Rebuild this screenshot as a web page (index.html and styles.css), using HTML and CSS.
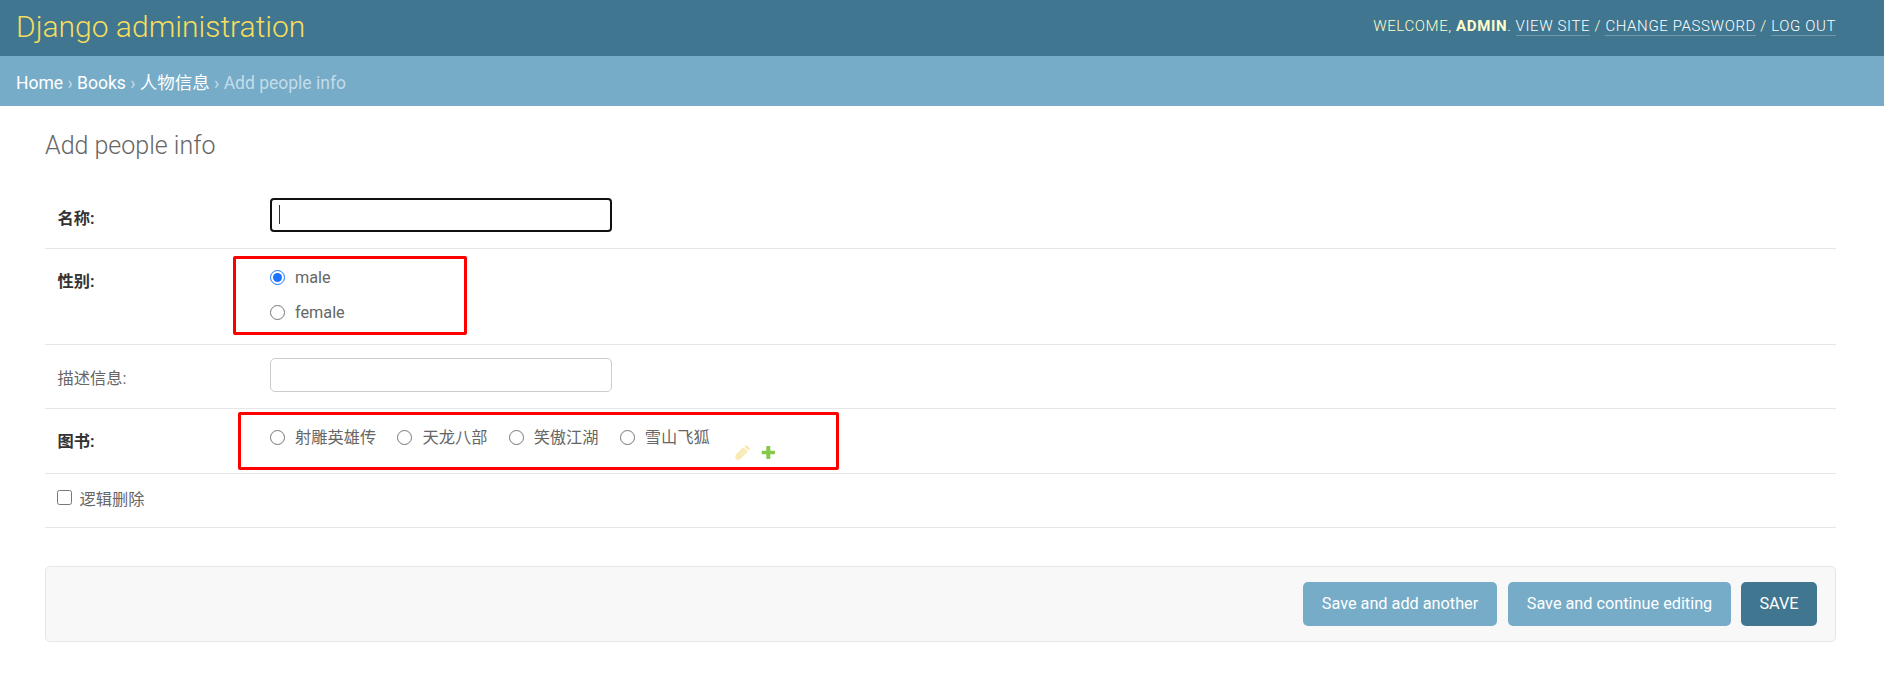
FILE: index.html
```html
<!DOCTYPE html>
<html lang="zh-CN">
<head>
<meta charset="utf-8">
<title>Add people info | Django site admin</title>
<link rel="stylesheet" href="styles.css">
</head>
<body>
<header class="header">
  <div class="site-name">Django administration</div>
  <div class="user-tools">Welcome, <strong>admin</strong>. <a>View site</a> / <a>Change password</a> / <a>Log out</a></div>
</header>
<nav class="breadcrumbs"><a>Home</a> › <a>Books</a> › <a>人物信息</a> › Add people info</nav>
<main class="content">
  <h1 class="title">Add people info</h1>
  <form>
    <div class="row row-name">
      <label class="label required">名称:</label>
      <div class="field focused"><input class="text-input" type="text"></div>
    </div>
    <div class="row row-gender">
      <span class="label required">性别:</span>
      <div class="radio-list">
        <label class="option"><input class="radio" type="radio" name="gender" checked><span class="option-text">male</span></label>
        <label class="option"><input class="radio" type="radio" name="gender"><span class="option-text">female</span></label>
      </div>
      <div class="mark mark-gender"></div>
    </div>
    <div class="row row-desc">
      <label class="label">描述信息:</label>
      <div class="field"><input class="text-input" type="text"></div>
    </div>
    <div class="row row-book">
      <span class="label required">图书:</span>
      <div class="radio-inline">
        <label class="option"><input class="radio" type="radio" name="book"><span class="option-text">射雕英雄传</span></label>
        <label class="option"><input class="radio" type="radio" name="book"><span class="option-text">天龙八部</span></label>
        <label class="option"><input class="radio" type="radio" name="book"><span class="option-text">笑傲江湖</span></label>
        <label class="option"><input class="radio" type="radio" name="book"><span class="option-text">雪山飞狐</span></label>
      </div>
      <div class="related">
        <svg class="icon faded" viewBox="0 0 15 15"><path fill="#efb80b" d="M.6 10.1 8.4 2.3l4.3 4.3-7.8 7.8-3.2.4L.3 13.3zM9.4 1.4l.9-.9q.8-.7 1.6 0l2.6 2.6q.8.8 0 1.6l-.9.9z"/><path stroke="#fff" stroke-width=".5" fill="none" d="m3 10.8 6.4-6.4M4.3 12.2l6.4-6.4M1.3 12.3l1.6 1.6"/></svg>
        <svg class="icon" viewBox="0 0 15 15"><path fill="#70bf2b" fill-opacity=".85" d="M6 1h2.6q.7 0 .7.7v4h4q.7 0 .7.7v2.2q0 .7-.7.7h-4v4q0 .7-.7.7H6q-.7 0-.7-.7v-4h-4q-.7 0-.7-.7V6.4q0-.7.7-.7h4v-4Q5.300 1 6 1z"/></svg>
      </div>
      <div class="mark mark-book"></div>
    </div>
    <div class="row row-delete">
      <label class="check"><input class="checkbox" type="checkbox">逻辑删除</label>
    </div>
    <div class="submit-row">
      <button class="button add" type="button">Save and add another</button>
      <button class="button continue" type="button">Save and continue editing</button>
      <button class="button save" type="button">SAVE</button>
    </div>
  </form>
</main>
</body>
</html>
```
FILE: styles.css
```css
* { box-sizing: border-box; }

body {
  margin: 0;
  background: #fff;
  color: #666;
  font: 16.25px/20px Roboto, "Noto Sans CJK SC", sans-serif;
}

.header {
  display: flex;
  justify-content: space-between;
  align-items: center;
  height: 56px;
  padding: 0 48px 0 16px;
  background: #40768f;
  color: #ffc;
}

.site-name {
  color: #f5dd5d;
  font-size: 30px;
  font-weight: 300;
  line-height: 36px;
  padding-bottom: 2px;
}

.user-tools {
  font-size: 15px;
  font-weight: 300;
  letter-spacing: .62px;
  text-transform: uppercase;
  padding-bottom: 4px;
}

.user-tools strong { font-weight: 700; }

.user-tools a {
  color: #fff;
  border-bottom: 1px solid rgba(255, 255, 255, .25);
}

.breadcrumbs {
  height: 50px;
  padding: 14px 16px 0;
  background: #76acc8;
  color: #c4dce8;
  font-size: 17.5px;
  line-height: 26px;
}

.breadcrumbs a { color: #fff; }

.content { padding: 27px 48px 0 45px; }

.title {
  height: 25px;
  margin: 0 0 30px;
  font-size: 25px;
  font-weight: 300;
  line-height: 26px;
}

.row {
  position: relative;
  display: flex;
  align-items: flex-start;
  border-bottom: 1px solid #e6e6e6;
}

.row-name { height: 61px; padding-top: 10px; }
.row-gender { height: 96px; padding-top: 13px; }
.row-desc { height: 64px; padding-top: 13px; }
.row-book { height: 65px; padding-top: 13px; }
.row-delete { height: 54px; padding: 16px 0 0 12px; }

.label {
  width: 225px;
  padding: 10px 0 0 12.5px;
}

.row-name .label,
.row-desc .label { padding-top: 11px; }

.required { color: #333; font-weight: 700; }

.field { position: relative; }

.text-input {
  display: block;
  width: 342px;
  height: 34px;
  border: 1px solid #ccc;
  border-radius: 5px;
}

.focused .text-input { border: 2px solid #101010; border-radius: 4px; }

.focused::after {
  content: "";
  position: absolute;
  left: 9px;
  top: 7px;
  width: 1px;
  height: 19px;
  background: #333;
}

.radio-list { display: grid; gap: 15px; padding-top: 5px; }
.radio-inline { display: flex; gap: 21.2px; padding-top: 5px; }

.option { display: flex; align-items: flex-start; height: 20px; }
.option-text { padding-top: 1px; }

.radio,
.checkbox {
  width: 15px;
  height: 15px;
  margin: 3px 10px 0 0;
  accent-color: #1a73ff;
}

.checkbox { margin: 0 7.5px 0 0; }
.check { display: flex; align-items: flex-start; }

.related { display: flex; gap: 11px; padding: 23px 0 0 25px; }
.icon { display: block; width: 15px; height: 15px; }
.faded { opacity: .33; }

.mark {
  position: absolute;
  border: 3px solid #f00;
  border-radius: 2px;
}

.mark-gender { left: 188px; top: 7px; width: 234px; height: 79px; }
.mark-book { left: 193px; top: 3px; width: 601px; height: 58px; }

.submit-row {
  display: flex;
  justify-content: flex-end;
  height: 76px;
  margin-top: 38px;
  padding: 15px 18px 0 0;
  background: #f8f8f8;
  border: 1px solid #e6e6e6;
  border-radius: 5px;
}

.button {
  height: 44px;
  padding: 0;
  border: 0;
  border-radius: 5px;
  background: #76acc8;
  color: #fff;
  font: inherit;
}

.add { width: 194px; margin-right: 11px; }
.continue { width: 223px; margin-right: 10px; }
.save { width: 76px; background: #40768f; }
```
